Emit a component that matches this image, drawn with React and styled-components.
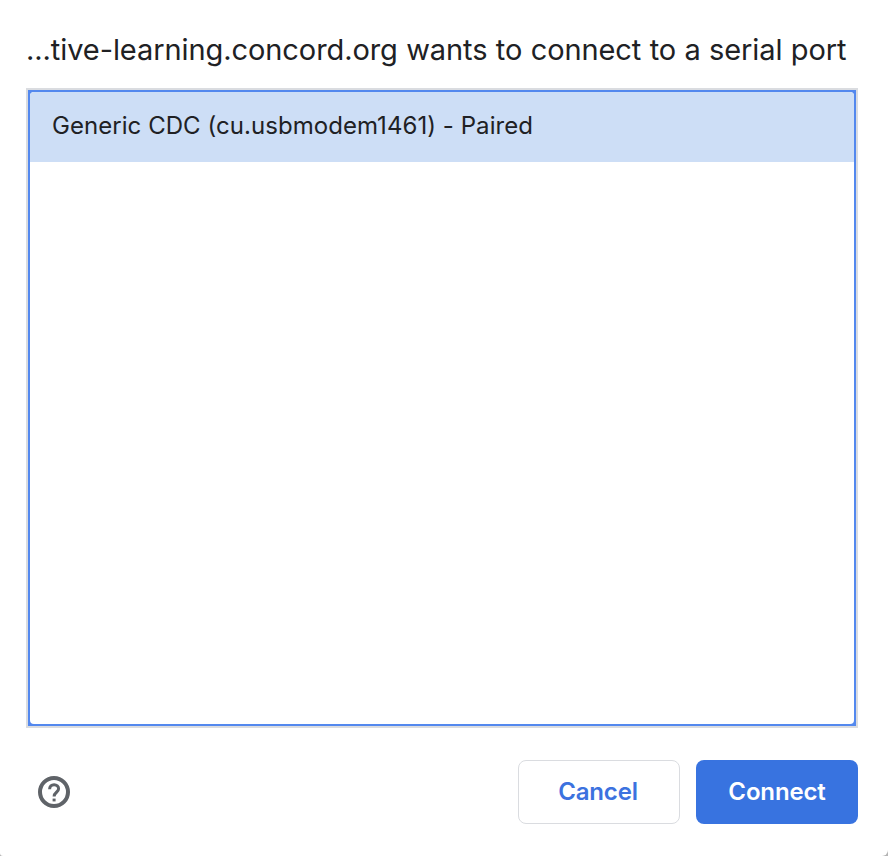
import React from "react";
import styled, { createGlobalStyle } from "styled-components";

const GlobalStyle = createGlobalStyle`
  * { box-sizing: border-box; }
  body { margin: 0; background: #b4b4b4; }
`;

const Dialog = styled.main`
  width: 888px;
  height: 856px;
  padding: 28px 30px 32px 26px;
  display: flex;
  flex-direction: column;
  background: #fff;
  border-radius: 0 0 6px 3px;
  color: #202124;
  font-family: Inter, Roboto, sans-serif;
  font-feature-settings: "calt" 0;
`;

const Title = styled.h1`
  margin: 0 0 16px;
  height: 44px;
  font-size: 29px;
  line-height: 44px;
  font-weight: 400;
  white-space: nowrap;
  letter-spacing: -0.08px;
  word-spacing: 0.3px;
`;

const PortFrame = styled.div`
  width: 832px;
  height: 640px;
  border: 2px solid #dadce0;
  background: #5388ee;
  padding: 2px;
`;

const PortList = styled.ul`
  margin: 0;
  padding: 0;
  list-style: none;
  height: 100%;
  border-radius: 4px;
  overflow: hidden;
  background: #fff;
`;

const PortItem = styled.li`
  height: 70px;
  padding: 0 22px;
  line-height: 68px;
  font-size: 24px;
  letter-spacing: 0.05px;
  white-space: nowrap;
  background: #cddef6;
`;

const Footer = styled.footer`
  margin-top: 32px;
  height: 64px;
  display: flex;
  align-items: center;
  gap: 16px;
`;

const HelpButton = styled.button`
  margin: 0 auto 0 12px;
  padding: 0;
  width: 32px;
  height: 32px;
  border: 0;
  background: none;
`;

const HelpIcon = styled.svg`
  display: block;
  width: 32px;
  height: 32px;
`;

const Button = styled.button`
  width: 162px;
  height: 64px;
  padding: 0 0 2px;
  border-radius: 8px;
  border: ${(p) => (p.$primary ? "0" : "1px solid #dadce0")};
  background: ${(p) => (p.$primary ? "#3873e0" : "#fff")};
  color: ${(p) => (p.$primary ? "#fff" : "#3c72df")};
  font: 600 24px Inter, Roboto, sans-serif;
  letter-spacing: -0.15px;
`;

const ButtonLabel = styled.span`
  display: block;
  padding-right: ${(p) => (p.$nudge ? "2px" : "0")};
`;

export default function App() {
  return (
    <>
      <GlobalStyle />
      <Dialog>
        <Title>...tive-learning.concord.org wants to connect to a serial port</Title>
        <PortFrame>
          <PortList>
            <PortItem>Generic CDC (cu.usbmodem1461) - Paired</PortItem>
          </PortList>
        </PortFrame>
        <Footer>
          <HelpButton aria-label="Help">
            <HelpIcon viewBox="0 0 32 32" fill="none" stroke="#5f6368">
              <circle cx="16" cy="16" r="14" strokeWidth="4" />
              <path d="M11.600 13.200c0-2.700 1.900-4.500 4.500-4.500s4.500 1.800 4.500 4.100c0 3.500-4.500 3.500-4.500 7.700" strokeWidth="3" />
              <path d="M14.600 24h3" strokeWidth="2.800" />
            </HelpIcon>
          </HelpButton>
          <Button>
            <ButtonLabel $nudge>Cancel</ButtonLabel>
          </Button>
          <Button $primary>
            <ButtonLabel>Connect</ButtonLabel>
          </Button>
        </Footer>
      </Dialog>
    </>
  );
}
